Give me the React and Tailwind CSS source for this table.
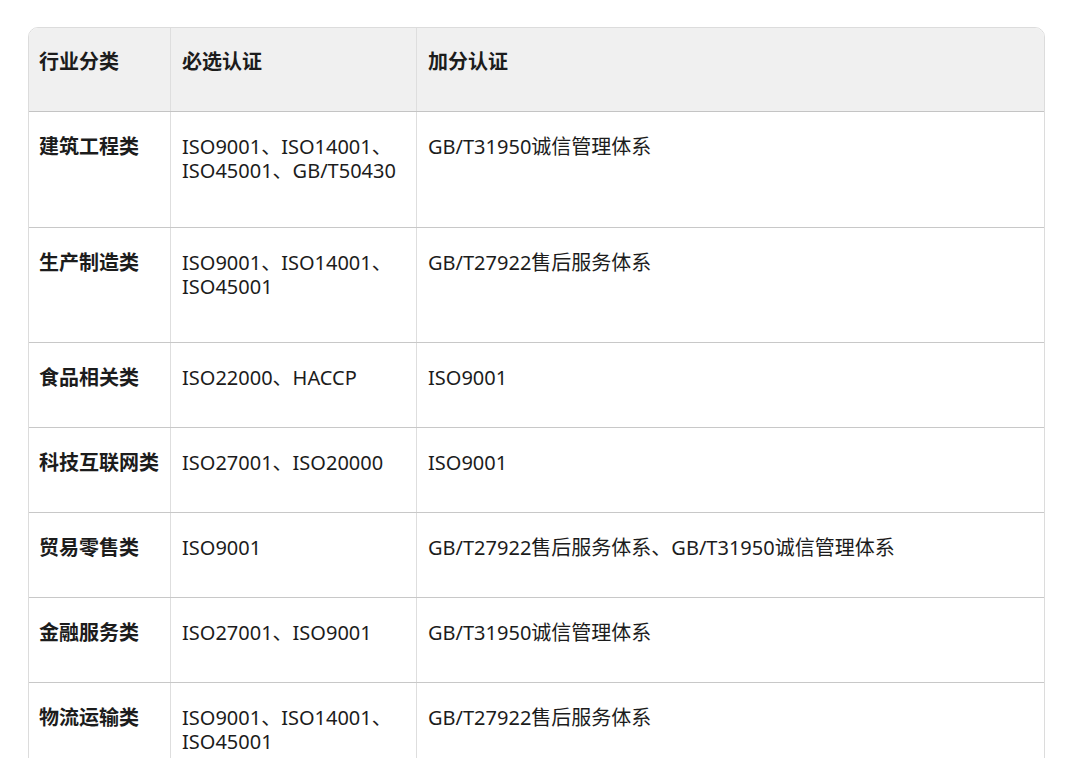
export default function App() {
  const rows = [
    ["建筑工程类", "ISO9001、ISO14001、ISO45001、GB/T50430", "GB/T31950诚信管理体系", "h-[116px]"],
    ["生产制造类", "ISO9001、ISO14001、ISO45001", "GB/T27922售后服务体系", "h-[115px]"],
    ["食品相关类", "ISO22000、HACCP", "ISO9001", "h-[85px]"],
    ["科技互联网类", "ISO27001、ISO20000", "ISO9001", "h-[85px]"],
    ["贸易零售类", "ISO9001", "GB/T27922售后服务体系、GB/T31950诚信管理体系", "h-[85px]"],
    ["金融服务类", "ISO27001、ISO9001", "GB/T31950诚信管理体系", "h-[85px]"],
    ["物流运输类", "ISO9001、ISO14001、ISO45001", "GB/T27922售后服务体系", "h-[116px]"],
  ];
  return (
    <div className="w-[1080px] h-[758px] overflow-hidden bg-white pt-[27px] pl-[28px]" style={{ fontFamily: '"Noto Sans", "Noto Sans CJK SC", sans-serif' }}>
      <div className="w-[1017px] rounded-t-[10px] border border-[#dcdcdc] overflow-hidden text-[20px] leading-[24px] text-[#1c1c1c]">
        <div className="grid grid-cols-[142px_246px_1fr] h-[84px] bg-[#f0f0f0] border-b border-[#c4c4c4] font-bold">
          <div className="pt-[22px] pl-[10px] border-r border-[#dedede]">行业分类</div>
          <div className="pt-[22px] pl-[11px] border-r border-[#dedede]">必选认证</div>
          <div className="pt-[22px] pl-[11px]">加分认证</div>
        </div>
        {rows.map(([a, b, c, h], i) => (
          <div key={i} className={`grid grid-cols-[142px_246px_1fr] ${h} border-b border-[#c8c8c8]`}>
            <div className="pt-[23px] pl-[10px] border-r border-[#dedede] font-bold">{a}</div>
            <div className="pt-[23px] pl-[11px] pr-[6px] border-r border-[#dedede]">{b}</div>
            <div className="pt-[23px] pl-[11px]">{c}</div>
          </div>
        ))}
      </div>
    </div>
  );
}
